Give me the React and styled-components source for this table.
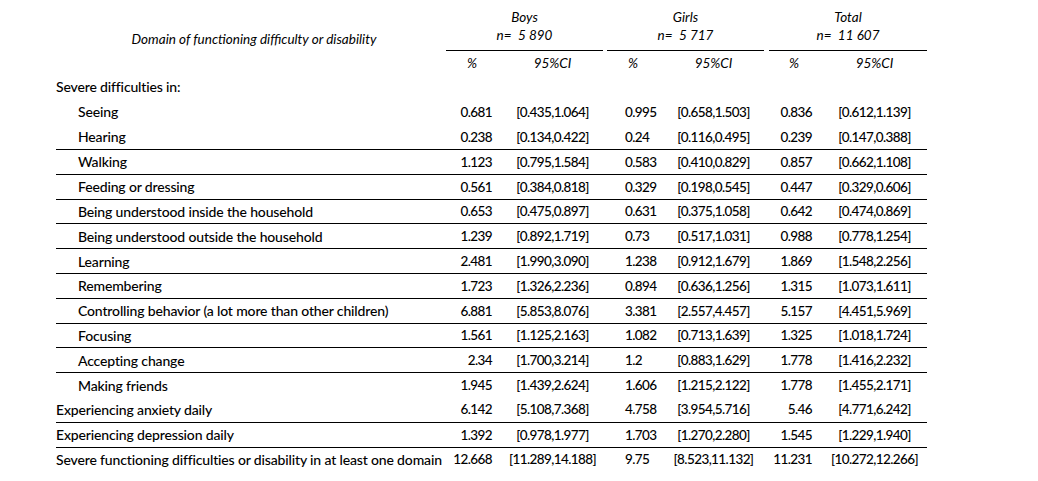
import React from 'react'
import styled, { createGlobalStyle } from 'styled-components'

const GlobalStyle = createGlobalStyle`
  body {
    margin: 0;
    background: #fff;
    color: #000;
    font-family: Lato, "Open Sans", sans-serif;
  }
`

const COLS = '388px 56px 105px 56px 105px 56px 105px'

const Table = styled.div`
  margin-left: 56px;
  width: 871px;
  font-size: 14px;
  font-weight: 500;
`

const HeadTop = styled.div`
  display: grid;
  grid-template-columns: 388px 161px 161px 161px;
  height: 51px;
`

const DomainTitle = styled.div`
  font-style: italic;
  font-size: 13.5px;
  font-weight: 400;
  line-height: 18px;
  text-align: center;
  padding: 30px 0 0 8px;
  white-space: nowrap;
`

const Group = styled.div`
  font-style: italic;
  font-size: 13.5px;
  font-weight: 400;
  text-align: center;
  line-height: 18px;
  padding-top: 8px;
  box-sizing: border-box;
  height: 51px;
  margin: 0 ${p => (p.$last ? '0' : '2px')} 0 ${p => (p.$last ? '3px' : '2px')};
  border-bottom: 1px solid #000;
`

const SubHead = styled.div`
  display: grid;
  grid-template-columns: ${COLS};
  height: 23.6px;
  align-items: center;
  font-style: italic;
  font-size: 13.5px;
  font-weight: 400;
`

const SubCell = styled.div`
  text-align: center;
`

const Row = styled.div`
  display: grid;
  grid-template-columns: ${COLS};
  align-items: center;
  height: 24.8px;
  box-sizing: border-box;
  border-top: ${p => (p.$ruled ? '1px solid #000' : '0')};
`

const Label = styled.div`
  padding-left: ${p => (p.$indent ? '22px' : '0')};
  letter-spacing: -0.15px;
  white-space: nowrap;
`

const Pct = styled.div`
  font-size: 13.5px;
  letter-spacing: -0.6px;
  text-align: ${p => p.$align};
  padding-left: ${p => (p.$align === 'left' ? '20px' : '0')};
  padding-right: ${p => (p.$align === 'right' ? p.$pr : '0')};
`

const CI = styled.div`
  font-size: 13.5px;
  letter-spacing: -0.6px;
  text-align: center;
  white-space: nowrap;
`

const groups = [
  { name: 'Boys', n: '5 890', align: 'right', pr: '8px' },
  { name: 'Girls', n: '5 717', align: 'left' },
  { name: 'Total', n: '11 607', align: 'right', pr: '10px' },
]

const rows = [
  { label: 'Severe difficulties in:' },
  { label: 'Seeing', indent: true, v: ['0.681', '[0.435,1.064]', '0.995', '[0.658,1.503]', '0.836', '[0.612,1.139]'] },
  { label: 'Hearing', indent: true, v: ['0.238', '[0.134,0.422]', '0.24', '[0.116,0.495]', '0.239', '[0.147,0.388]'] },
  { label: 'Walking', indent: true, ruled: true, v: ['1.123', '[0.795,1.584]', '0.583', '[0.410,0.829]', '0.857', '[0.662,1.108]'] },
  { label: 'Feeding or dressing', indent: true, ruled: true, v: ['0.561', '[0.384,0.818]', '0.329', '[0.198,0.545]', '0.447', '[0.329,0.606]'] },
  { label: 'Being understood inside the household', indent: true, ruled: true, v: ['0.653', '[0.475,0.897]', '0.631', '[0.375,1.058]', '0.642', '[0.474,0.869]'] },
  { label: 'Being understood outside the household', indent: true, ruled: true, v: ['1.239', '[0.892,1.719]', '0.73', '[0.517,1.031]', '0.988', '[0.778,1.254]'] },
  { label: 'Learning', indent: true, ruled: true, v: ['2.481', '[1.990,3.090]', '1.238', '[0.912,1.679]', '1.869', '[1.548,2.256]'] },
  { label: 'Remembering', indent: true, ruled: true, v: ['1.723', '[1.326,2.236]', '0.894', '[0.636,1.256]', '1.315', '[1.073,1.611]'] },
  { label: 'Controlling behavior (a lot more than other children)', indent: true, ruled: true, v: ['6.881', '[5.853,8.076]', '3.381', '[2.557,4.457]', '5.157', '[4.451,5.969]'] },
  { label: 'Focusing', indent: true, ruled: true, v: ['1.561', '[1.125,2.163]', '1.082', '[0.713,1.639]', '1.325', '[1.018,1.724]'] },
  { label: 'Accepting change', indent: true, ruled: true, v: ['2.34', '[1.700,3.214]', '1.2', '[0.883,1.629]', '1.778', '[1.416,2.232]'] },
  { label: 'Making friends', indent: true, ruled: true, v: ['1.945', '[1.439,2.624]', '1.606', '[1.215,2.122]', '1.778', '[1.455,2.171]'] },
  { label: 'Experiencing anxiety daily', v: ['6.142', '[5.108,7.368]', '4.758', '[3.954,5.716]', '5.46', '[4.771,6.242]'] },
  { label: 'Experiencing depression daily', ruled: true, v: ['1.392', '[0.978,1.977]', '1.703', '[1.270,2.280]', '1.545', '[1.229,1.940]'] },
  { label: 'Severe functioning difficulties or disability in at least one domain', ruled: true, v: ['12.668', '[11.289,14.188]', '9.75', '[8.523,11.132]', '11.231', '[10.272,12.266]'] },
]

export default function App() {
  return (
    <>
      <GlobalStyle />
      <Table>
        <HeadTop>
          <DomainTitle>Domain of functioning difficulty or disability</DomainTitle>
          {groups.map((g, i) => (
            <Group key={g.name} $last={i === groups.length - 1}>
              <div>{g.name}</div>
              <div>n=&nbsp; {g.n}</div>
            </Group>
          ))}
        </HeadTop>
        <SubHead>
          <div />
          {groups.map(g => (
            <React.Fragment key={g.name}>
              <SubCell>%</SubCell>
              <SubCell>95%CI</SubCell>
            </React.Fragment>
          ))}
        </SubHead>
        {rows.map(r => (
          <Row key={r.label} $ruled={r.ruled}>
            <Label $indent={r.indent}>{r.label}</Label>
            {r.v && groups.map((g, i) => (
              <React.Fragment key={g.name}>
                <Pct $align={g.align} $pr={g.pr}>{r.v[i * 2]}</Pct>
                <CI>{r.v[i * 2 + 1]}</CI>
              </React.Fragment>
            ))}
          </Row>
        ))}
      </Table>
    </>
  )
}
